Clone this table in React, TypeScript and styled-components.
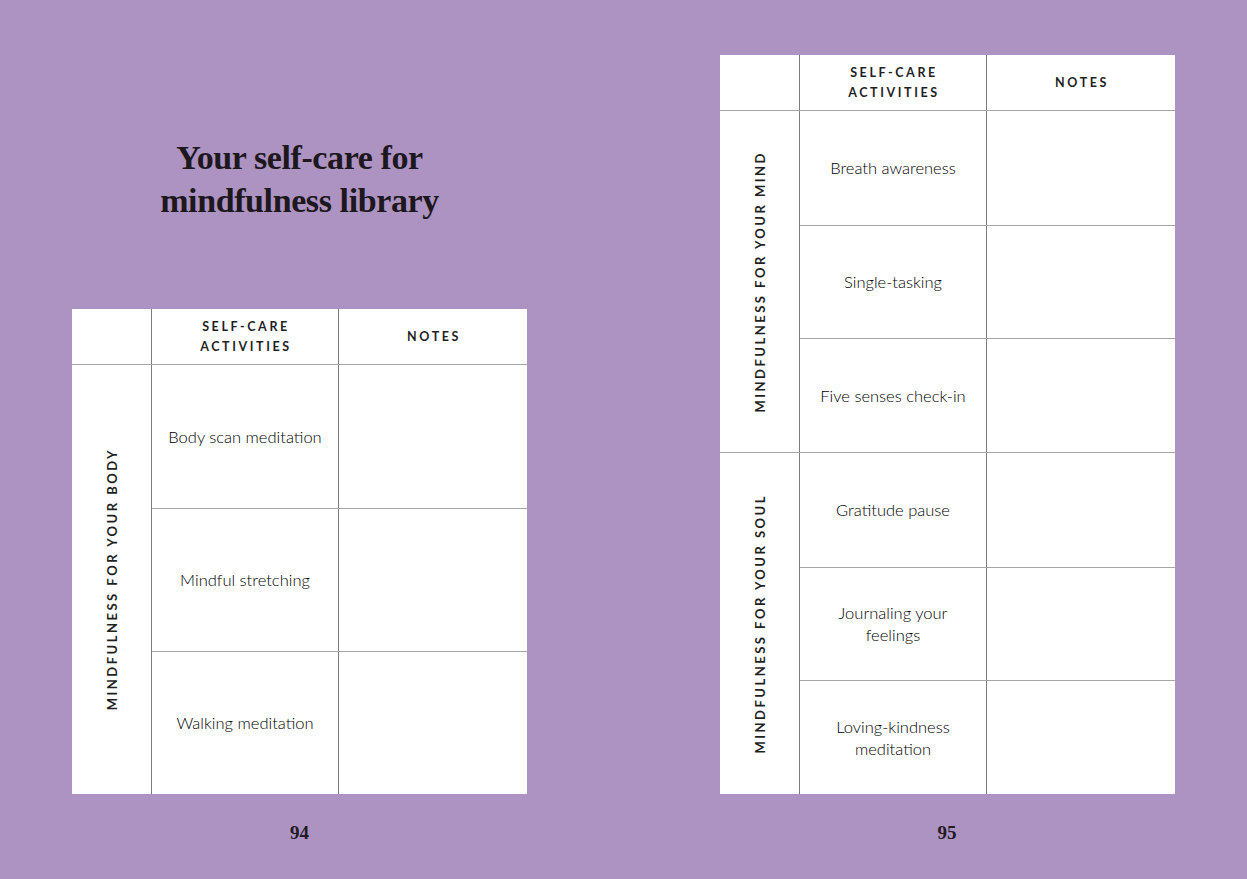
import styled, { createGlobalStyle } from "styled-components";

interface Activity {
  id: number;
  label: string;
}

interface Group {
  id: number;
  title: string;
  activities: Activity[];
}

const bodyGroups: Group[] = [
  {
    id: 1,
    title: "Mindfulness for your body",
    activities: [
      { id: 1, label: "Body scan meditation" },
      { id: 2, label: "Mindful stretching" },
      { id: 3, label: "Walking meditation" },
    ],
  },
];

const mindSoulGroups: Group[] = [
  {
    id: 2,
    title: "Mindfulness for your mind",
    activities: [
      { id: 4, label: "Breath awareness" },
      { id: 5, label: "Single-tasking" },
      { id: 6, label: "Five senses check-in" },
    ],
  },
  {
    id: 3,
    title: "Mindfulness for your soul",
    activities: [
      { id: 7, label: "Gratitude pause" },
      { id: 8, label: "Journaling your\nfeelings" },
      { id: 9, label: "Loving-kindness\nmeditation" },
    ],
  },
];

const LibraryTable = ({ groups, rowHeight }: { groups: Group[]; rowHeight: number }) => (
  <Table>
    <HeaderRow>
      <HeaderCell />
      <HeaderCell $divided>
        Self-care
        <br />
        activities
      </HeaderCell>
      <HeaderCell $divided>Notes</HeaderCell>
    </HeaderRow>
    {groups.map((group) => (
      <GroupBlock key={group.id}>
        <GroupLabel>
          <span>{group.title}</span>
        </GroupLabel>
        <Rows>
          {group.activities.map((a) => (
            <Row key={a.id} $height={rowHeight}>
              <ActivityCell>{a.label}</ActivityCell>
              <NotesCell />
            </Row>
          ))}
        </Rows>
      </GroupBlock>
    ))}
  </Table>
);

const App = () => {
  return (
    <>
      <GlobalStyle />
      <Spread>
        <Page $side="left">
          <Title>
            Your self-care for
            <br />
            mindfulness library
          </Title>
          <LibraryTable groups={bodyGroups} rowHeight={143} />
          <PageNumber>94</PageNumber>
        </Page>
        <Page $side="right">
          <LibraryTable groups={mindSoulGroups} rowHeight={113.7} />
          <PageNumber>95</PageNumber>
        </Page>
      </Spread>
    </>
  );
};

const GlobalStyle = createGlobalStyle`
  * { box-sizing: border-box; }
  html, body {
    margin: 0;
    padding: 0;
    background: #ad93c2;
  }
  body {
    font-family: Lato, "Open Sans", sans-serif;
    color: #222;
  }
`;

const Spread = styled.div`
  width: 1247px;
  height: 879px;
  display: grid;
  grid-template-columns: 623px 624px;
  background: #ad93c2;
  overflow: hidden;
`;

const Page = styled.div<{ $side: "left" | "right" }>`
  display: flex;
  flex-direction: column;
  align-items: stretch;
  padding: 55px ${(p) => (p.$side === "left" ? "96px" : "73px")} 0
    ${(p) => (p.$side === "left" ? "72px" : "97px")};
  height: 100%;
`;

const Title = styled.h1`
  margin: 81px 0 0;
  text-align: center;
  font-family: "Liberation Serif", "DejaVu Serif", serif;
  font-weight: 700;
  font-size: 34px;
  line-height: 43px;
  letter-spacing: -0.4px;
  color: #1d181d;
`;

const Table = styled.div`
  margin-top: auto;
  width: 455px;
  background: #fff;
  display: flex;
  flex-direction: column;
`;

const HeaderRow = styled.div`
  display: grid;
  grid-template-columns: 79px 187px 1fr;
  height: 56px;
  border-bottom: 1px solid #a6a6a6;
`;

const HeaderCell = styled.div<{ $divided?: boolean }>`
  display: flex;
  align-items: center;
  justify-content: center;
  text-align: center;
  border-left: ${(p) => (p.$divided ? "1px solid #7d7d7d" : "none")};
  font-family: Lato, sans-serif;
  font-weight: 700;
  font-size: 12.5px;
  line-height: 20px;
  letter-spacing: 2.6px;
  text-transform: uppercase;
  color: #1f1f1f;
  padding-left: 2px;
`;

const GroupBlock = styled.div`
  display: grid;
  grid-template-columns: 79px 1fr;

  & + & {
    border-top: 1px solid #a6a6a6;
  }
`;

const GroupLabel = styled.div`
  display: flex;
  align-items: center;
  justify-content: center;

  span {
    writing-mode: vertical-rl;
    transform: rotate(180deg);
    font-family: Lato, sans-serif;
    font-weight: 700;
    font-size: 13px;
    letter-spacing: 2.5px;
    text-transform: uppercase;
    color: #1f1f1f;
    white-space: nowrap;
  }
`;

const Rows = styled.div`
  display: flex;
  flex-direction: column;
  border-left: 1px solid #7d7d7d;
`;

const Row = styled.div<{ $height: number }>`
  display: grid;
  grid-template-columns: 186px 1fr;
  height: ${(p) => p.$height}px;

  & + & {
    border-top: 1px solid #a6a6a6;
  }
`;

const ActivityCell = styled.div`
  display: flex;
  align-items: center;
  justify-content: center;
  text-align: center;
  white-space: pre-line;
  font-family: Lato, sans-serif;
  font-weight: 300;
  font-size: 16.5px;
  line-height: 22px;
  color: #000;
  padding: 0 4px;
`;

const NotesCell = styled.div`
  border-left: 1px solid #7d7d7d;
`;

const PageNumber = styled.div`
  margin: 27px 0 34px;
  text-align: center;
  font-family: "Liberation Serif", serif;
  font-weight: 700;
  font-size: 19px;
  line-height: 24px;
  color: #231a23;
`;

export default App;
